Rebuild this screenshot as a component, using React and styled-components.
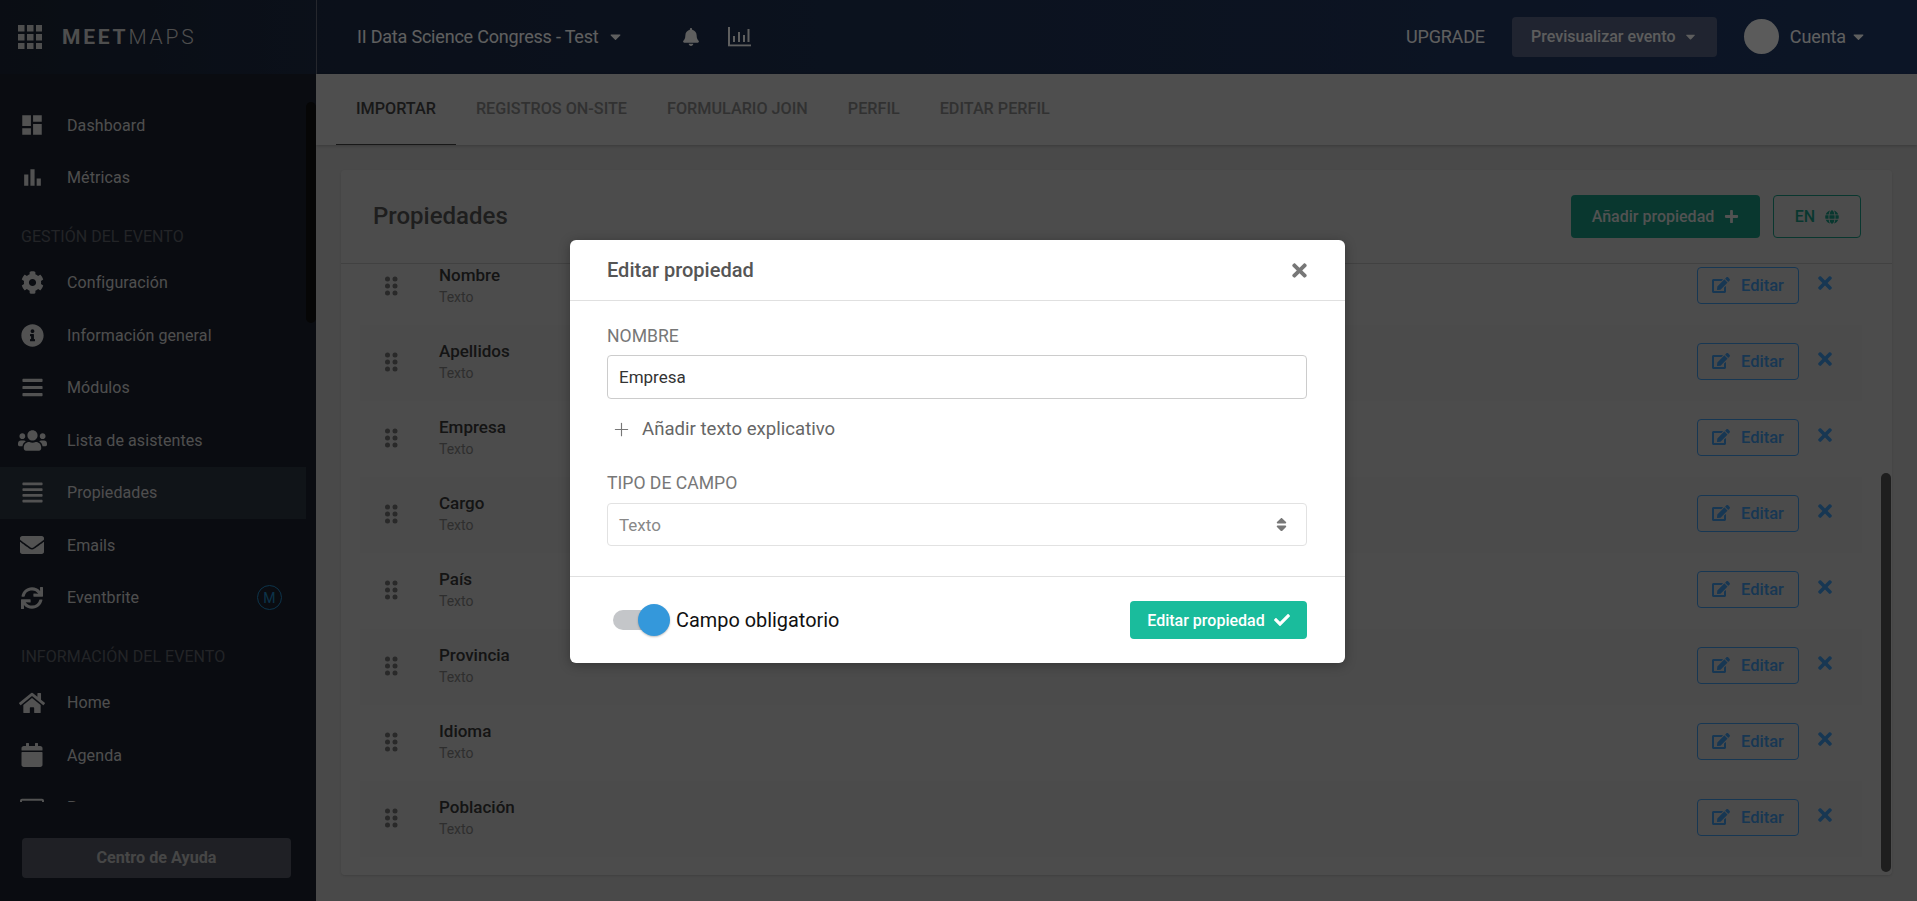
import React from "react";
import styled, { createGlobalStyle } from "styled-components";
import {
  FaBell, FaCalendar, FaCaretDown, FaCheck, FaCog, FaEdit, FaEnvelope, FaGlobe, FaHome,
  FaInfoCircle, FaPlus, FaRegAddressCard, FaSort, FaSync, FaTimes, FaUsers, FaBars, FaAlignJustify,
} from "react-icons/fa";
import { MdDashboard, MdBarChart } from "react-icons/md";
import { Plus } from "lucide-react";

const Global = createGlobalStyle`
  html, body { margin: 0; padding: 0; height: 100%; overflow: hidden; }
  * { box-sizing: border-box; }
  body { font-family: Roboto, "Liberation Sans", sans-serif; }
`;

const Shell = styled.div`
  position: relative;
  width: 100%;
  height: 100vh;
  display: flex;
  flex-direction: column;
  overflow: hidden;
  background: #b6b6b6;
`;

const Topbar = styled.header`
  flex: 0 0 74px;
  display: flex;
  align-items: center;
  color: #eeeeee;
  background: linear-gradient(90deg, #1a2232 0%, #1c2942 18%, #1f3660 100%);
`;

const LogoCell = styled.div`
  flex: 0 0 317px;
  height: 100%;
  display: flex;
  align-items: center;
  gap: 20px;
  padding-left: 18px;
  border-right: 1px solid #5c6270;
  color: #c4c4c4;
`;

const Wordmark = styled.div`
  font-size: 21px;
  letter-spacing: 2.8px;
  font-weight: 300;
  b { font-weight: 700; }
`;

const EventTitle = styled.div`
  margin: -2px 0 0 40px;
  display: flex;
  align-items: center;
  gap: 9px;
  font-size: 18px;
  letter-spacing: -0.2px;
`;

const ToolIcons = styled.div`
  margin-left: 58px;
  display: flex;
  align-items: center;
  gap: 28px;
`;

const TopRight = styled.div`
  margin: -1px 0 0 auto;
  padding-right: 50px;
  display: flex;
  align-items: center;
`;

const Upgrade = styled.span`
  font-size: 18px;
  letter-spacing: -0.2px;
`;

const PreviewButton = styled.div`
  margin-left: 27px;
  width: 205px;
  height: 40px;
  border-radius: 4px;
  background: #505b78;
  display: flex;
  align-items: center;
  justify-content: center;
  gap: 7px;
  font-size: 16px;
  font-weight: 500;
  color: #e8e8e8;
`;

const Avatar = styled.div`
  margin-left: 27px;
  width: 35px;
  height: 35px;
  border-radius: 50%;
  background: #e4e4e4;
`;

const Account = styled.div`
  margin-left: 11px;
  display: flex;
  align-items: center;
  gap: 4px;
  font-size: 18px;
  letter-spacing: -0.1px;
`;

const Body = styled.div`
  flex: 1;
  min-height: 0;
  display: flex;
`;

const Sidebar = styled.aside`
  position: relative;
  flex: 0 0 316px;
  display: flex;
  flex-direction: column;
  background: #1a202c;
`;

const Menu = styled.nav`
  margin-top: 25px;
  width: 306px;
  height: 703px;
  overflow: hidden;
`;

const SideThumb = styled.div`
  position: absolute;
  left: 306px;
  top: 28px;
  width: 10px;
  height: 221px;
  border-radius: 5px;
  background: #0f0f0f;
`;

const MenuItem = styled.div`
  height: 52.5px;
  display: flex;
  align-items: center;
  padding-right: 24px;
  font-size: 16px;
  letter-spacing: 0.1px;
  color: #c4c4c4;
  background: ${(p) => (p.$active ? "#2a323e" : "transparent")};
`;

const MenuIcon = styled.span`
  flex: 0 0 67px;
  display: flex;
  align-items: center;
  justify-content: center;
  padding-right: 3px;
  font-size: 22px;
  color: #cccccc;
`;

const MenuBadge = styled.span`
  margin-left: auto;
  width: 25px;
  height: 25px;
  border-radius: 50%;
  border: 1px solid #2080b8;
  color: #2080b8;
  display: flex;
  align-items: center;
  justify-content: center;
  font-size: 14px;
`;

const SectionTitle = styled.div`
  height: 52.5px;
  display: flex;
  align-items: center;
  padding: 13px 0 0 21px;
  font-size: 16px;
  letter-spacing: 0.05px;
  color: #585b62;
`;

const HelpButton = styled.div`
  margin: 36px 25px 0 22px;
  height: 40px;
  padding-bottom: 2px;
  border-radius: 4px;
  background: #4e525e;
  display: flex;
  align-items: center;
  justify-content: center;
  font-size: 16.2px;
  font-weight: 700;
  color: #b0b0b0;
`;

const Main = styled.main`
  flex: 1;
  min-width: 0;
  display: flex;
  flex-direction: column;
`;

const Tabs = styled.div`
  flex: 0 0 71px;
  display: flex;
  padding-left: 20px;
  background: #c2c2c2;
  box-shadow: 0 1px 3px rgba(0, 0, 0, 0.2);
`;

const Tab = styled.div`
  padding: 0 20px 2px;
  display: flex;
  align-items: center;
  font-size: 16.2px;
  font-weight: 500;
  color: ${(p) => (p.$active ? "#3e3e3e" : "#7c7c7c")};
  border-bottom: 1px solid ${(p) => (p.$active ? "#3e3e3e" : "transparent")};
`;

const Content = styled.div`
  flex: 1;
  min-height: 0;
  padding: 25px 25px 26px;
  display: flex;
`;

const Card = styled.section`
  position: relative;
  flex: 1;
  display: flex;
  flex-direction: column;
  background: #bfbfbf;
  border-radius: 4px;
  overflow: hidden;
  box-shadow: 0 1px 2px rgba(0, 0, 0, 0.12);
`;

const CardHeader = styled.div`
  flex: 0 0 94px;
  display: flex;
  align-items: center;
  padding: 0 31px 2px 32px;
  border-bottom: 1px solid #a2a2a2;
`;

const CardTitle = styled.h1`
  margin: 0 auto 0 0;
  font-size: 24px;
  font-weight: 500;
  color: #4c4c4c;
`;

const AddButton = styled.div`
  margin-top: 2px;
  width: 189px;
  height: 43px;
  border-radius: 4px;
  background: #178b76;
  color: #cccccc;
  display: flex;
  align-items: center;
  justify-content: center;
  gap: 10px;
  font-size: 16px;
  font-weight: 500;
`;

const LangButton = styled.div`
  margin: 2px 0 0 13px;
  width: 88px;
  height: 43px;
  border-radius: 4px;
  border: 1px solid #178b76;
  color: #178b76;
  display: flex;
  align-items: center;
  justify-content: center;
  gap: 10px;
  font-size: 16px;
  font-weight: 500;
`;

const List = styled.div`
  flex: 1;
  min-height: 0;
  overflow: hidden;
  padding: 0 30px 0 19px;
`;

const Row = styled.div`
  height: 76px;
  display: flex;
  align-items: flex-start;
  padding: 0 27px 0 25px;
  background: ${(p) => (p.$shaded ? "#bbbbbb" : "transparent")};
  &:first-child { margin-top: -15px; }
`;

const Handle = styled.svg`
  flex: 0 0 13px;
  margin-top: 27px;
  color: #666666;
`;

const RowInfo = styled.div`
  margin: 16px auto 0 41px;
`;

const RowName = styled.div`
  font-size: 17px;
  line-height: 20px;
  font-weight: 500;
  color: #333333;
`;

const RowType = styled.div`
  margin-top: 2px;
  font-size: 14px;
  line-height: 20px;
  color: #747474;
`;

const EditButton = styled.div`
  margin-top: 18px;
  width: 102px;
  height: 37px;
  padding-bottom: 1px;
  border: 1px solid #3b8ad0;
  border-radius: 4px;
  color: #3b8ad0;
  display: flex;
  align-items: center;
  justify-content: center;
  gap: 11px;
  font-size: 16.5px;
  font-weight: 500;
`;

const RemoveIcon = styled.span`
  margin: 24px 0 0 16px;
  display: flex;
  font-size: 20px;
  color: #3b8ad0;
`;

const ListThumb = styled.div`
  position: absolute;
  right: 1px;
  bottom: 3px;
  width: 10px;
  height: 399px;
  border-radius: 5px;
  background: #4b4b4b;
`;

const Overlay = styled.div`
  position: absolute;
  inset: 0;
  display: flex;
  align-items: center;
  justify-content: center;
  padding: 2px 2px 0 0;
  background: rgba(0, 0, 0, 0.6);
`;

const Modal = styled.div`
  width: 775px;
  height: 423px;
  display: flex;
  flex-direction: column;
  border-radius: 6px;
  background: #ffffff;
  box-shadow: 0 2px 12px rgba(0, 0, 0, 0.3);
`;

const ModalHeader = styled.div`
  flex: 0 0 61px;
  display: flex;
  align-items: center;
  justify-content: space-between;
  padding: 0 35px 0 37px;
  border-bottom: 1px solid #e0e0e0;
`;

const ModalTitle = styled.h2`
  margin: 0;
  font-size: 20px;
  font-weight: 500;
  color: #555555;
`;

const CloseIcon = styled.span`
  display: flex;
  font-size: 21px;
  color: #777777;
`;

const ModalBody = styled.div`
  flex: 1;
  padding: 26px 38px 0 37px;
`;

const FieldLabel = styled.div`
  font-size: 17.6px;
  line-height: 19px;
  color: #777777;
  margin-top: ${(p) => (p.$spaced ? "15px" : "0")};
`;

const TextInput = styled.input`
  display: block;
  width: 100%;
  height: 44px;
  margin-top: 9px;
  padding: 0 11px;
  border: 1px solid #cccccc;
  border-radius: 4px;
  outline: none;
  font: 400 17px Roboto, sans-serif;
  color: #333333;
`;

const AddHint = styled.div`
  height: 60px;
  display: flex;
  align-items: center;
  gap: 10px;
  padding-left: 4px;
  font-size: 18.6px;
  color: #666666;
  svg { color: #777777; }
`;

const SelectBox = styled.div`
  height: 43px;
  margin-top: 10px;
  padding: 0 16px 0 11px;
  display: flex;
  align-items: center;
  justify-content: space-between;
  border: 1px solid #e2e2e2;
  border-radius: 4px;
  font-size: 17px;
  color: #888888;
  svg { color: #777777; }
`;

const ModalFooter = styled.div`
  flex: 0 0 87px;
  display: flex;
  align-items: center;
  padding: 0 38px 0 43px;
  border-top: 1px solid #e0e0e0;
`;

const Toggle = styled.div`
  position: relative;
  flex: 0 0 57px;
  height: 32px;
`;

const ToggleTrack = styled.div`
  position: absolute;
  left: 0;
  right: 12px;
  top: 6px;
  height: 20px;
  border-radius: 10px;
  background: #c4c6c9;
`;

const ToggleThumb = styled.div`
  position: absolute;
  right: 0;
  top: 0;
  width: 32px;
  height: 32px;
  border-radius: 50%;
  background: #3498db;
  box-shadow: 0 1px 2px rgba(0, 0, 0, 0.25);
`;

const ToggleLabel = styled.span`
  margin: 0 auto 0 6px;
  font-size: 19.9px;
  color: #111111;
`;

const SaveButton = styled.div`
  width: 177px;
  height: 38px;
  border-radius: 4px;
  background: #1abc9c;
  color: #ffffff;
  display: flex;
  align-items: center;
  justify-content: center;
  gap: 9px;
  font-size: 16px;
  font-weight: 500;
`;

const GridLogo = () => (
  <svg width="24" height="24" viewBox="0 0 24 24" fill="currentColor">
    {[0, 9, 18].flatMap((y) => [0, 9, 18].map((x) => <rect key={`${x}-${y}`} x={x} y={y} width="6.5" height="6.5" />))}
  </svg>
);

const StatsIcon = () => (
  <svg width="23" height="20" viewBox="0 0 23 20" fill="currentColor">
    <rect x="0" y="0" width="2" height="19" />
    <rect x="0" y="17.5" width="23" height="1.8" />
    <rect x="5" y="9" width="2" height="6" />
    <rect x="10" y="5" width="2" height="10" />
    <rect x="15" y="8" width="2" height="7" />
    <rect x="19.5" y="2" width="2" height="13" />
  </svg>
);

const DragDots = () => (
  <Handle width="13" height="20" viewBox="0 0 13 20" fill="currentColor">
    {[3, 10, 17].flatMap((y) => [2.5, 10].map((x) => <circle key={`${x}-${y}`} cx={x} cy={y} r="2.5" />))}
  </Handle>
);

const mainItems = [
  { icon: <MdDashboard size={26} />, label: "Dashboard" },
  { icon: <MdBarChart size={25} />, label: "Métricas" },
];
const eventItems = [
  { icon: <FaCog size={23} />, label: "Configuración" },
  { icon: <FaInfoCircle size={23} />, label: "Información general" },
  { icon: <FaBars size={23} />, label: "Módulos" },
  { icon: <FaUsers size={29} />, label: "Lista de asistentes" },
  { icon: <FaAlignJustify size={23} />, label: "Propiedades", active: true },
  { icon: <FaEnvelope size={24} />, label: "Emails" },
  { icon: <FaSync size={22} />, label: "Eventbrite", badge: "M" },
];
const infoItems = [
  { icon: <FaHome size={26} />, label: "Home" },
  { icon: <FaCalendar size={24} />, label: "Agenda" },
  { icon: <FaRegAddressCard size={24} />, label: "Ponentes" },
];
const tabs = ["IMPORTAR", "REGISTROS ON-SITE", "FORMULARIO JOIN", "PERFIL", "EDITAR PERFIL"];
const properties = ["Nombre", "Apellidos", "Empresa", "Cargo", "País", "Provincia", "Idioma", "Población"];

const renderItems = (items) =>
  items.map((item) => (
    <MenuItem key={item.label} $active={item.active}>
      <MenuIcon>{item.icon}</MenuIcon>
      {item.label}
      {item.badge && <MenuBadge>{item.badge}</MenuBadge>}
    </MenuItem>
  ));

export default function App() {
  return (
    <Shell>
      <Global />
      <Topbar>
        <LogoCell>
          <GridLogo />
          <Wordmark><b>MEET</b>MAPS</Wordmark>
        </LogoCell>
        <EventTitle>II Data Science Congress - Test <FaCaretDown size={17} /></EventTitle>
        <ToolIcons>
          <FaBell size={18} />
          <StatsIcon />
        </ToolIcons>
        <TopRight>
          <Upgrade>UPGRADE</Upgrade>
          <PreviewButton>Previsualizar evento <FaCaretDown size={15} /></PreviewButton>
          <Avatar />
          <Account>Cuenta <FaCaretDown size={17} /></Account>
        </TopRight>
      </Topbar>
      <Body>
        <Sidebar>
          <Menu>
            {renderItems(mainItems)}
            <SectionTitle>GESTIÓN DEL EVENTO</SectionTitle>
            {renderItems(eventItems)}
            <SectionTitle>INFORMACIÓN DEL EVENTO</SectionTitle>
            {renderItems(infoItems)}
          </Menu>
          <SideThumb />
          <HelpButton>Centro de Ayuda</HelpButton>
        </Sidebar>
        <Main>
          <Tabs>
            {tabs.map((t, i) => <Tab key={t} $active={i === 0}>{t}</Tab>)}
          </Tabs>
          <Content>
            <Card>
              <CardHeader>
                <CardTitle>Propiedades</CardTitle>
                <AddButton>Añadir propiedad <FaPlus size={15} /></AddButton>
                <LangButton>EN <FaGlobe size={14} /></LangButton>
              </CardHeader>
              <List>
                {properties.map((name, i) => (
                  <Row key={name} $shaded={i % 2 === 1}>
                    <DragDots />
                    <RowInfo>
                      <RowName>{name}</RowName>
                      <RowType>Texto</RowType>
                    </RowInfo>
                    <EditButton><FaEdit size={18} /> Editar</EditButton>
                    <RemoveIcon><FaTimes /></RemoveIcon>
                  </Row>
                ))}
              </List>
              <ListThumb />
            </Card>
          </Content>
        </Main>
      </Body>
      <Overlay>
        <Modal>
          <ModalHeader>
            <ModalTitle>Editar propiedad</ModalTitle>
            <CloseIcon><FaTimes /></CloseIcon>
          </ModalHeader>
          <ModalBody>
            <FieldLabel>NOMBRE</FieldLabel>
            <TextInput readOnly value="Empresa" />
            <AddHint><Plus size={21} strokeWidth={1.3} /> Añadir texto explicativo</AddHint>
            <FieldLabel $spaced>TIPO DE CAMPO</FieldLabel>
            <SelectBox>Texto <FaSort size={17} /></SelectBox>
          </ModalBody>
          <ModalFooter>
            <Toggle>
              <ToggleTrack />
              <ToggleThumb />
            </Toggle>
            <ToggleLabel>Campo obligatorio</ToggleLabel>
            <SaveButton>Editar propiedad <FaCheck size={16} /></SaveButton>
          </ModalFooter>
        </Modal>
      </Overlay>
    </Shell>
  );
}
